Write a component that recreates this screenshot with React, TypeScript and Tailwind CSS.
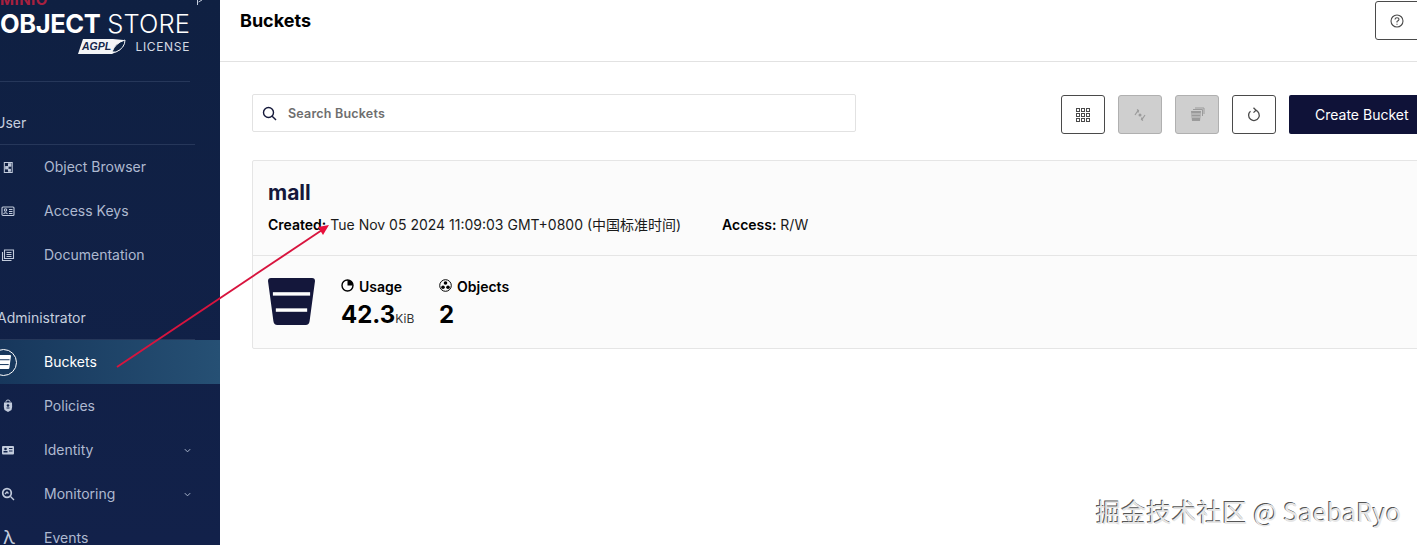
import React from "react";

const Ic = ({ children, size = 14 }: { children: React.ReactNode; size?: number }) => (
  <svg width={size} height={size} viewBox="0 0 14 14" fill="none" stroke="currentColor" strokeWidth="1.1">
    {children}
  </svg>
);

const BucketShape = ({ fill, line, size }: { fill: string; line: string; size: number }) => (
  <svg width={size} height={size} viewBox="0 0 48 48">
    <path d="M3 0H45Q48 0 48 3L42.500 44Q42 48 38.500 48H9.500Q6 48 5.500 44L0 3Q0 0 3 0Z" fill={fill} />
    <rect x="5" y="14.500" width="38" height="3.500" fill={line} />
    <rect x="8" y="31" width="32" height="3.500" fill={line} />
  </svg>
);

const NavItem = ({ label, icon, chevron, active }: { label: string; icon: React.ReactNode; chevron?: boolean; active?: boolean }) => (
  <div className={`flex h-11 shrink-0 items-center ${active ? "bg-gradient-to-r from-[#17375c] to-[#265074] text-white" : "text-[#aeb9d0]"}`}>
    <div className="flex w-11 shrink-0 items-center pl-[2px]">{icon}</div>
    <span className="flex-1 text-sm">{label}</span>
    {chevron && (
      <svg className="mr-[28px]" width="9" height="9" viewBox="0 0 10 10" fill="none" stroke="#aab6cc" strokeWidth="1.100">
        <path d="M2 3.500L5 6.500L8 3.500" />
      </svg>
    )}
  </div>
);

const ToolButton = ({ children, disabled }: { children: React.ReactNode; disabled?: boolean }) => (
  <div className={`flex h-[39px] w-11 items-center justify-center rounded-[3px] border ${disabled ? "border-[#b0b0b0] bg-[#cfcfcf] text-[#9b9b9b]" : "border-[#4a4a4a] bg-white text-[#4a4a4a]"}`}>
    {children}
  </div>
);

export default function App() {
  return (
    <div className="relative flex h-[545px] w-[1417px] overflow-hidden bg-white text-black" style={{ fontFamily: "Inter, 'Noto Sans CJK SC', sans-serif" }}>
      <aside className="relative flex h-[545px] w-[220px] shrink-0 flex-col overflow-hidden bg-gradient-to-b from-[#0f2042] to-[#12214a]">
        <svg className="absolute left-[195px] top-0" width="10" height="6" viewBox="0 0 10 6" fill="none" stroke="#c5cede" strokeWidth="1">
          <path d="M2.500 0V5M7 0L3.500 2" />
        </svg>
        <div className="relative h-[82px] w-[190px] shrink-0 border-b border-[#26375a]">
          <div className="-mt-[7px] h-[14px] text-[15px] font-bold leading-[14px] tracking-[0.5px] text-[#a8203f]">MINIO</div>
          <div className="mt-[3px] flex h-[28px] justify-between whitespace-nowrap text-[25.500px] leading-[28px] text-white">
            <span className="font-bold tracking-[-0.4px]">OBJECT</span>
            <span className="font-light tracking-[0.1px]">STORE</span>
          </div>
          <div className="flex items-center justify-end gap-[9px]">
            <svg width="49" height="16" viewBox="0 0 49 16">
              <path d="M5 0H35L46 1L42 11L34 15H0Z" fill="#f4f5f7" />
              <text x="4" y="11" fontSize="10.500" fontStyle="italic" fontFamily="Liberation Sans" fill="#14264a" fontWeight="700">AGPL</text>
              <path d="M34 13Q37 4 47 1Q47 9 38 13Z" fill="#0e2344" stroke="#f4f5f7" strokeWidth="1" />
            </svg>
            <span className="text-[12px] tracking-[0.65px] text-[#d5dae4]">LICENSE</span>
          </div>
        </div>

        <div className="-ml-[5px] mt-[32px] flex h-[31px] w-[200px] shrink-0 items-center border-b border-[#26375a] pb-[12px] text-sm text-[#c5cede]">User</div>
        <div className="mb-[30px] flex flex-col">
          <NavItem label="Object Browser" icon={<span className="text-[#c2cbdc]"><Ic size={13}><path d="M2.500 1.500H11V12.500H2.500Z" /><rect x="7" y="3" width="2.500" height="2.500" fill="currentColor" /><rect x="4" y="6" width="2.500" height="2.500" fill="currentColor" /><rect x="7" y="9" width="2" height="2" fill="currentColor" /></Ic></span>} />
          <NavItem label="Access Keys" icon={<span className="-ml-[1px] text-[#c2cbdc]"><Ic size={14}><rect x="1" y="3" width="12" height="8.500" rx="1" /><circle cx="4.500" cy="6" r="1.200" /><path d="M2.500 10Q4.500 7.500 6.500 10M8 5.500H11.500M8 7.500H11.500M8 9.500H11.500" /></Ic></span>} />
          <NavItem label="Documentation" icon={<span className="-ml-[1px] text-[#c2cbdc]"><Ic size={14}><path d="M3.500 2H12.500V10.500H3.500ZM1.500 4V12.500H10.500M5.500 4.500H10.500M5.500 6.500H10.500M5.500 8.500H10.500" /></Ic></span>} />
        </div>

        <div className="-ml-[3px] flex h-[22px] shrink-0 items-center text-sm text-[#c5cede]">Administrator</div>
        <div className="mt-[10px] h-px w-[195px] shrink-0 bg-[#26375a]" />
        <div className="flex flex-col">
          <NavItem
            active
            label="Buckets"
            icon={
              <div className="-ml-[12px] flex h-[27px] w-[27px] items-center justify-center rounded-full border border-white">
                <BucketShape size={14} fill="#ffffff" line="#1a3a5f" />
              </div>
            }
          />
          <NavItem label="Policies" icon={<span className="-ml-[1px] text-[#c2cbdc]"><svg width="14" height="14" viewBox="0 0 14 14"><path d="M5 3.500V2.500Q5 1 7 1Q9 1 9 2.500V3.500" fill="none" stroke="currentColor" /><path d="M3 3.500H11Q11.500 8 10.500 11L7 13L3.500 11Q2.500 8 3 3.500Z" fill="currentColor" /><circle cx="7" cy="6.500" r="1.300" fill="#11224a" /><rect x="5.500" y="8.500" width="3" height="1" fill="#11224a" /></svg></span>} />
          <NavItem chevron label="Identity" icon={<span className="-ml-[1px] text-[#c2cbdc]"><svg width="14" height="14" viewBox="0 0 14 14"><rect x="1" y="3" width="12" height="8.500" rx="1" fill="currentColor" /><circle cx="4.500" cy="6" r="1.300" fill="#11224a" /><rect x="2.500" y="8" width="4" height="1.500" fill="#11224a" /><rect x="8" y="5" width="3.500" height="1" fill="#11224a" /><rect x="8" y="7.500" width="3.500" height="1" fill="#11224a" /></svg></span>} />
          <NavItem chevron label="Monitoring" icon={<span className="-ml-[1px] text-[#c2cbdc]"><svg width="14" height="14" viewBox="0 0 14 14" fill="none" stroke="currentColor" strokeWidth="1.700"><circle cx="6" cy="6" r="4.300" /><path d="M9.500 9.500L13 13M4 7L6 5L7.500 6.500" strokeWidth="1.400" /></svg></span>} />
          <NavItem label="Events" icon={<span className="ml-px text-[19px] leading-[20px] text-[#c2cbdc]">λ</span>} />
        </div>
      </aside>

      <main className="flex min-w-0 flex-1 flex-col">
        <header className="flex h-[62px] shrink-0 items-start justify-between border-b border-[#e2e2e2] pl-5">
          <h1 className="mt-[9px] text-[18px] font-bold leading-6 text-[#000]">Buckets</h1>
          <div className="mt-px -mr-2 flex h-[39px] w-[50px] items-center pl-[14px] rounded-[3px] border border-[#4a4a4a] text-[#4a4a4a]">
            <svg width="14" height="14" viewBox="0 0 14 14" fill="none" stroke="currentColor" strokeWidth="1.100">
              <circle cx="7" cy="7" r="6" />
              <path d="M5 5.500Q5 3.700 7 3.700Q9 3.700 9 5.300Q9 6.400 7 7.500V8.500M7 9.700V10.700" />
            </svg>
          </div>
        </header>

        <div className="flex min-w-0 flex-col pl-8">
          <div className="mt-8 flex items-start justify-between">
            <div className="flex h-[38px] w-[604px] items-center gap-[11px] rounded-[2px] border border-[#e2e2e2] pl-[9px] text-[12.500px] font-semibold tracking-[0.2px] text-[#6e6e6e]">
              <svg width="15" height="15" viewBox="0 0 15 15" fill="none" stroke="#15193a" strokeWidth="1.400">
                <circle cx="6.500" cy="6.500" r="5" />
                <path d="M10.200 10.200L14 14" />
              </svg>
              <span className="mt-[2px]">Search Buckets</span>
            </div>
            <div className="-mr-[12px] mt-px flex gap-[13px]">
              <ToolButton>
                <svg width="14" height="14" viewBox="0 0 14 14" fill="none" stroke="currentColor" strokeWidth="1">
                  <rect x="0.500" y="0.500" width="3" height="3" /><rect x="5.500" y="0.500" width="3" height="3" /><rect x="10.500" y="0.500" width="3" height="3" />
                  <rect x="0.500" y="5.500" width="3" height="3" /><rect x="5.500" y="5.500" width="3" height="3" /><rect x="10.500" y="5.500" width="3" height="3" />
                  <rect x="0.500" y="10.500" width="3" height="3" /><rect x="5.500" y="10.500" width="3" height="3" /><rect x="10.500" y="10.500" width="3" height="3" />
                </svg>
              </ToolButton>
              <ToolButton disabled>
                <svg width="14" height="14" viewBox="0 0 14 14" fill="none" stroke="currentColor" strokeWidth="1.200">
                  <circle cx="7" cy="7" r="1.500" fill="currentColor" stroke="none" />
                  <path d="M2 7L5 2.500M4 1.500L5.500 2.500L5 4.500M12 7L9 11.500M10 12.500L8.500 11.500L9 9.500" />
                </svg>
              </ToolButton>
              <ToolButton disabled>
                <svg width="15" height="15" viewBox="0 0 15 15">
                  <path d="M1 4H11L10 14H2Z" fill="currentColor" />
                  <path d="M3 2.500H12.500V9" fill="none" stroke="currentColor" />
                  <path d="M5 1H14V7" fill="none" stroke="currentColor" />
                  <rect x="1.500" y="6.500" width="9" height="1" fill="#cfcfcf" />
                  <rect x="2" y="9.500" width="8" height="1" fill="#cfcfcf" />
                </svg>
              </ToolButton>
              <ToolButton>
                <svg width="14" height="15" viewBox="0 0 14 15" fill="none" stroke="currentColor" strokeWidth="1.300">
                  <path d="M8.500 3.200A5.300 5.300 0 1 1 3.500 4.200" />
                  <path d="M6.500 0.800L9 3.200L6.500 5.600" />
                </svg>
              </ToolButton>
              <div className="flex h-[39px] w-[140px] shrink-0 items-center rounded-[2px] bg-[#0f1238] pl-[26px] text-sm text-white">Create Bucket</div>
            </div>
          </div>

          <section className="-mr-4 mt-[26px] flex h-[189px] flex-col rounded-[2px] border border-[#e5e5e5] bg-[#fbfbfb]">
            <div className="h-[95px] shrink-0 border-b border-[#e5e5e5] pl-[15px]">
              <h2 className="mt-[19px] text-[21px] font-bold leading-[26px] text-[#14173b]">mall</h2>
              <div className="mt-[9px] flex whitespace-nowrap text-sm leading-[20px] text-[#1a1a1a]">
                <span className="w-[454px]"><b className="font-semibold text-black">Created:</b> Tue Nov 05 2024 11:09:03 GMT+0800 (中国标准时间)</span>
                <span><b className="font-semibold text-black">Access:</b> R/W</span>
              </div>
            </div>
            <div className="flex items-start pl-[15px] pt-[22px]">
              <BucketShape size={47} fill="#14173b" line="#ffffff" />
              <div className="ml-[26px] -mt-px w-[98px]">
                <div className="flex items-center gap-[5px] text-sm font-semibold leading-[20px] text-black">
                  <svg className="-mt-[3px]" width="13" height="13" viewBox="0 0 13 13">
                    <circle cx="6.500" cy="6.500" r="5.500" fill="none" stroke="#000" strokeWidth="1.400" />
                    <path d="M6.500 6.500V1A5.500 5.500 0 0 1 12 6.500Z" fill="#000" />
                  </svg>
                  Usage
                </div>
                <div className="mt-px flex items-baseline text-[24px] font-bold leading-[34px] text-black">
                  42.3<span className="text-xs font-normal text-[#333]">KiB</span>
                </div>
              </div>
              <div className="-mt-px">
                <div className="flex items-center gap-[5px] text-sm font-semibold leading-[20px] text-black">
                  <svg className="-mt-[3px]" width="13" height="13" viewBox="0 0 13 13">
                    <circle cx="6.500" cy="6.500" r="5.800" fill="none" stroke="#000" strokeWidth="1" />
                    <circle cx="6.500" cy="4" r="1.800" fill="#000" />
                    <circle cx="4" cy="8.300" r="1.800" fill="#000" />
                    <circle cx="9" cy="8.300" r="1.800" fill="#000" />
                  </svg>
                  Objects
                </div>
                <div className="mt-px text-[24px] font-bold leading-[34px] text-black">2</div>
              </div>
            </div>
          </section>
        </div>
      </main>

      <svg className="pointer-events-none absolute left-0 top-0" width="1417" height="545">
        <path d="M117 367L325 228" stroke="#d8143e" strokeWidth="1.900" fill="none" />
        <path d="M329 225L318 227L323 235Z" fill="#e8103c" />
      </svg>

      <div className="absolute left-[1096px] top-[494px] whitespace-nowrap text-[25px] leading-[34px] tracking-[0.27px] text-[#e6e6e6] [text-shadow:-1px_-1px_0_#555,1px_1px_0_#fff]" style={{ fontFamily: "'Noto Sans CJK SC', 'Liberation Sans', sans-serif" }}>
        掘金技术社区 @ SaebaRyo
      </div>
    </div>
  );
}
